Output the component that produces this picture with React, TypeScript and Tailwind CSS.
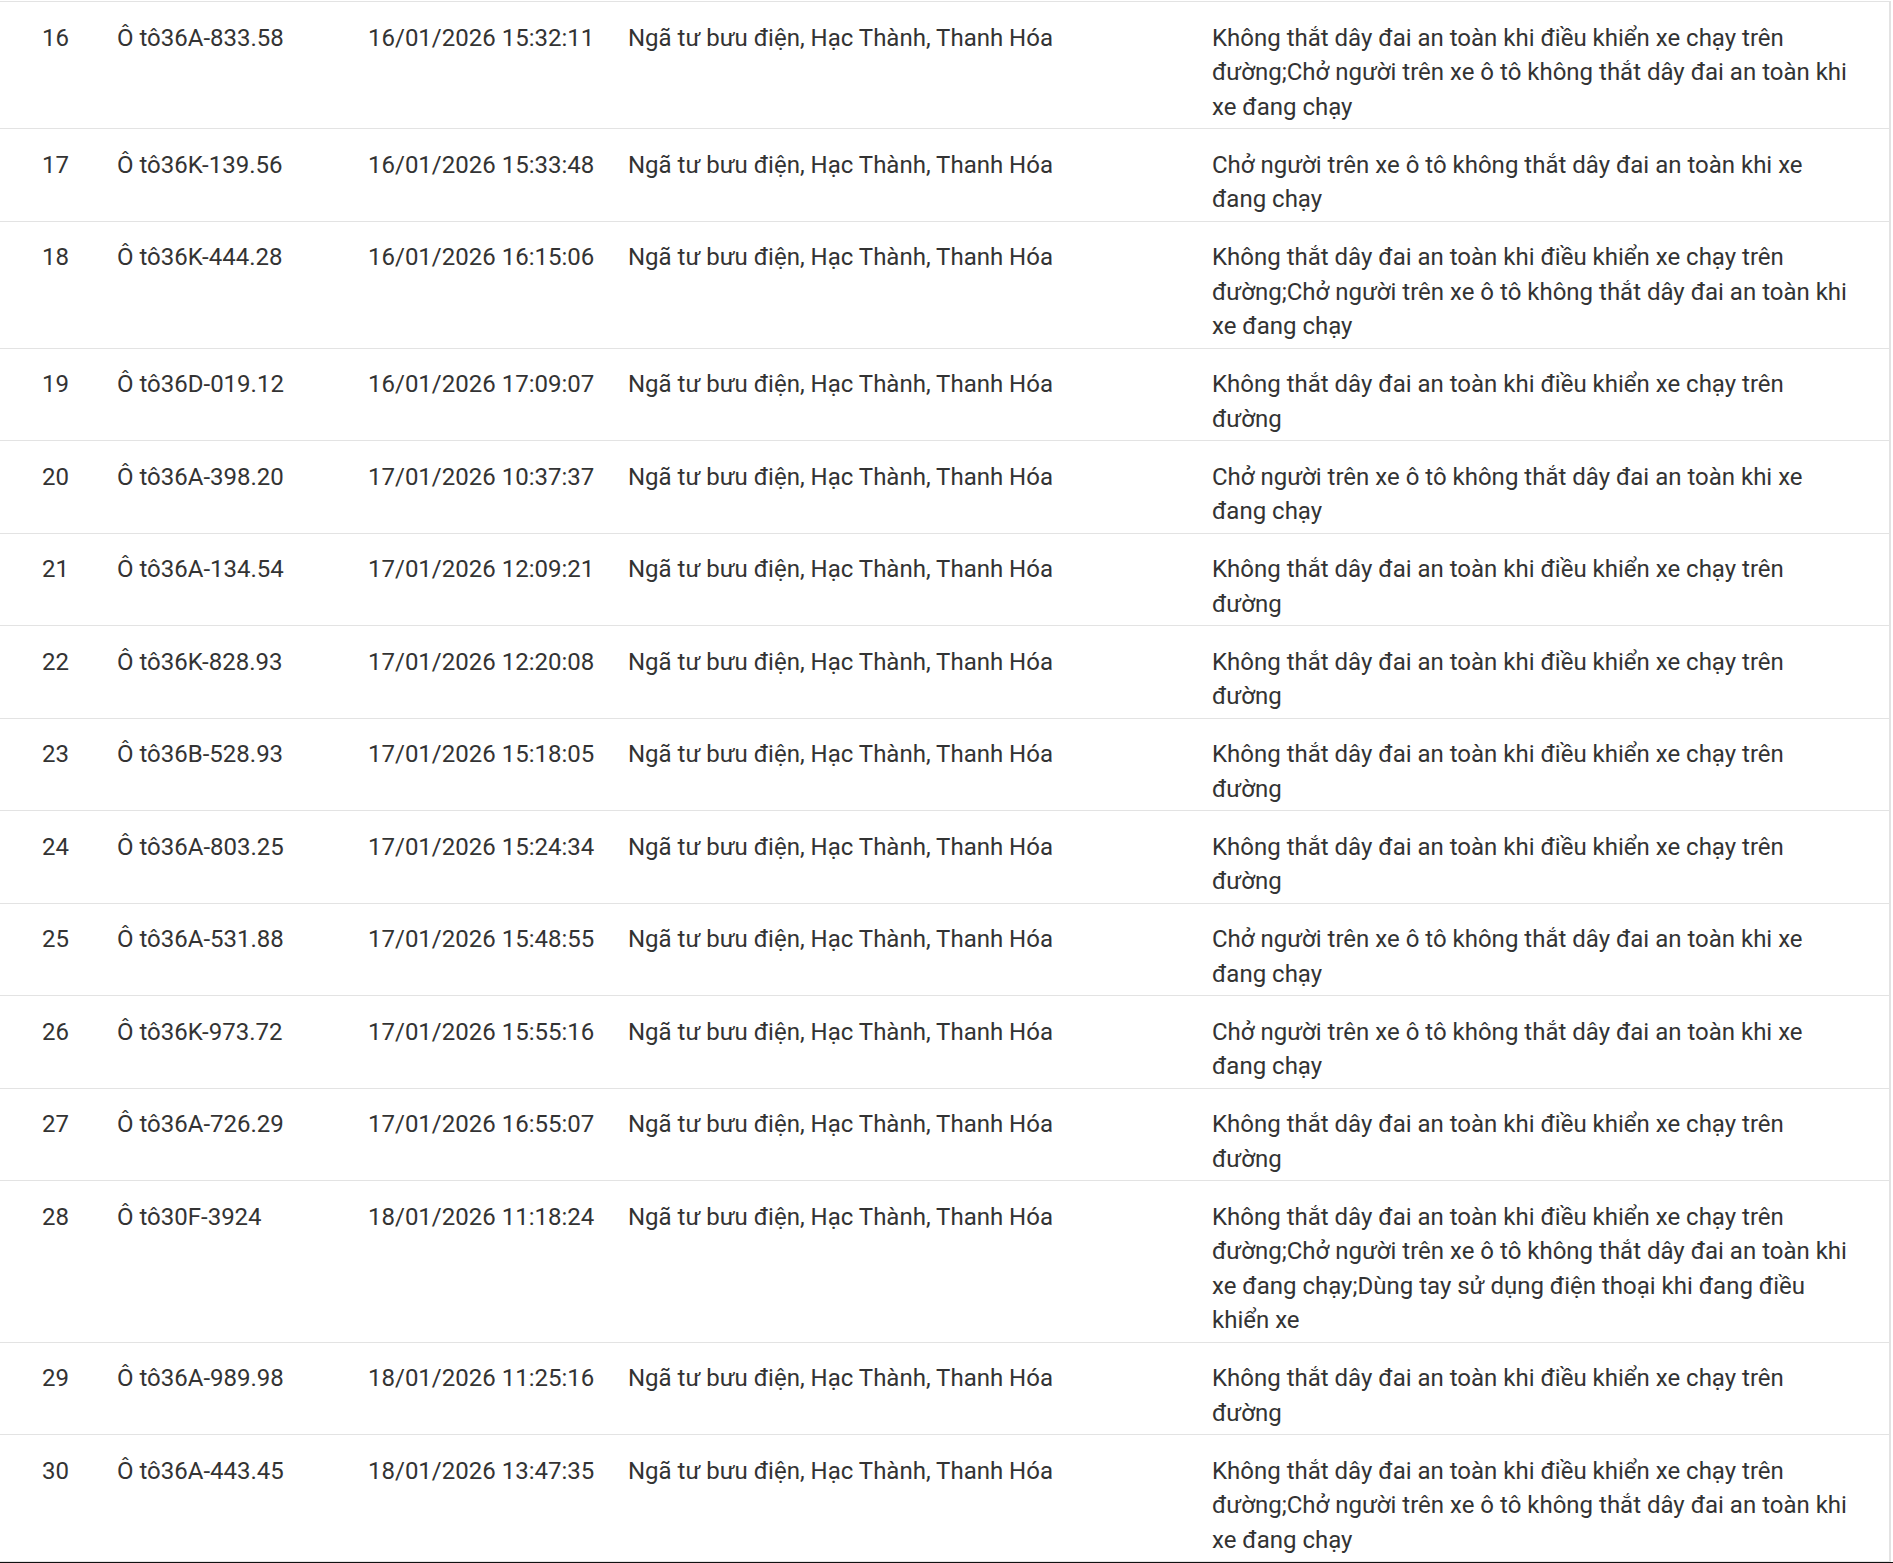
const K = "Không thắt dây đai an toàn khi điều khiển xe chạy trên đường";
const C = "Chở người trên xe ô tô không thắt dây đai an toàn khi xe đang chạy";
const D = "Dùng tay sử dụng điện thoại khi đang điều khiển xe";
const PLACE = "Ngã tư bưu điện, Hạc Thành, Thanh Hóa";

type Violation = {
    stt: number;
    plate: string;
    time: string;
    errors: string;
};

const rows: Violation[] = [
    { stt: 16, plate: "Ô tô36A-833.58", time: "16/01/2026 15:32:11", errors: `${K};${C}` },
    { stt: 17, plate: "Ô tô36K-139.56", time: "16/01/2026 15:33:48", errors: C },
    { stt: 18, plate: "Ô tô36K-444.28", time: "16/01/2026 16:15:06", errors: `${K};${C}` },
    { stt: 19, plate: "Ô tô36D-019.12", time: "16/01/2026 17:09:07", errors: K },
    { stt: 20, plate: "Ô tô36A-398.20", time: "17/01/2026 10:37:37", errors: C },
    { stt: 21, plate: "Ô tô36A-134.54", time: "17/01/2026 12:09:21", errors: K },
    { stt: 22, plate: "Ô tô36K-828.93", time: "17/01/2026 12:20:08", errors: K },
    { stt: 23, plate: "Ô tô36B-528.93", time: "17/01/2026 15:18:05", errors: K },
    { stt: 24, plate: "Ô tô36A-803.25", time: "17/01/2026 15:24:34", errors: K },
    { stt: 25, plate: "Ô tô36A-531.88", time: "17/01/2026 15:48:55", errors: C },
    { stt: 26, plate: "Ô tô36K-973.72", time: "17/01/2026 15:55:16", errors: C },
    { stt: 27, plate: "Ô tô36A-726.29", time: "17/01/2026 16:55:07", errors: K },
    { stt: 28, plate: "Ô tô30F-3924", time: "18/01/2026 11:18:24", errors: `${K};${C};${D}` },
    { stt: 29, plate: "Ô tô36A-989.98", time: "18/01/2026 11:25:16", errors: K },
    { stt: 30, plate: "Ô tô36A-443.45", time: "18/01/2026 13:47:35", errors: `${K};${C}` },
];

const App = () => {
    return (
        <div className="min-h-[1563px] w-[1893px] bg-white pt-px font-['Roboto','Liberation_Sans',sans-serif] text-[24px] leading-[34.5px] text-[#333333]">

            {/* TABLE */}
            <div className="w-[1891px] border-r-2 border-[#e3e3e3]">

                {rows.map((r) => (
                    <div
                        key={r.stt}
                        className="grid grid-cols-[117px_251px_260px_584px_1fr] border-t border-[#e3e3e3] pt-[18.5px] pb-[4px]"
                    >
                        <div className="pl-[42px]">{r.stt}</div>
                        <div>{r.plate}</div>
                        <div>{r.time}</div>
                        <div>{PLACE}</div>
                        <div className="w-[640px]">{r.errors}</div>
                    </div>
                ))}

                <div className="border-t border-[#e3e3e3]" />

            </div>

            {/* BOTTOM EDGE */}
            <div className="h-[3px] w-full bg-[#111111]" />

        </div>
    );
};

export default App;
